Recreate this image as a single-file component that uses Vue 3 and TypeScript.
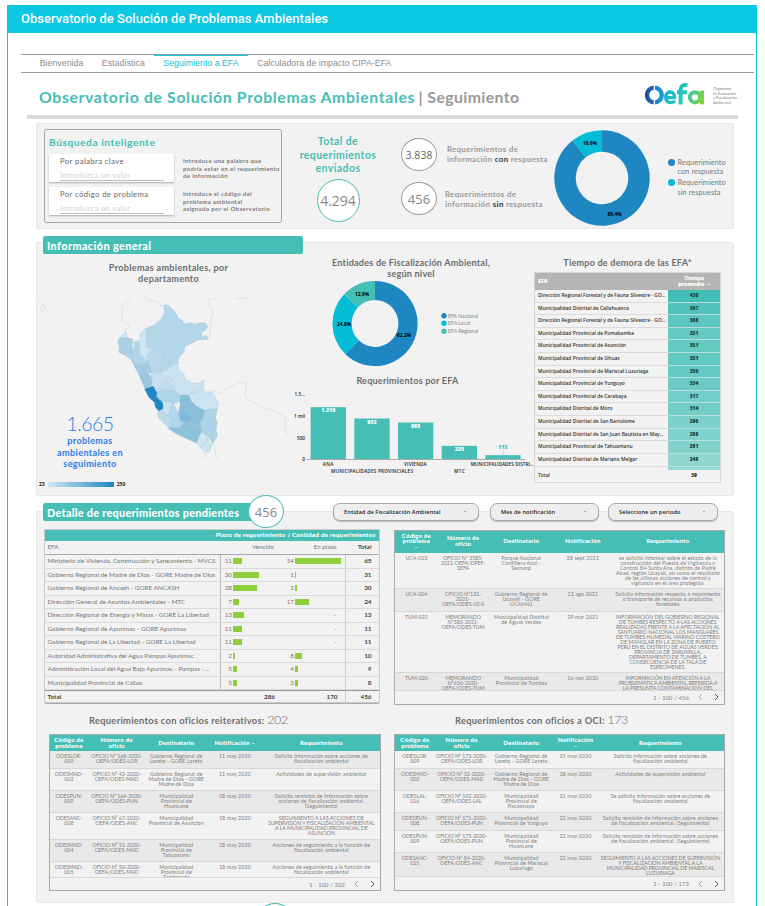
<script setup lang="ts">
interface Region { d: string; fill: string }
interface Grid {
  id: string
  cols: number[]
  head: string[]
  headHeight: number
  rows: { h: number; cells: string[] }[]
  shadeFirst: boolean
  footer: string
}

const tabs = ['Bienvenida', 'Estadística', 'Seguimiento a EFA', 'Calculadora de impacto CIPA-EFA']

const regions: Region[] = [
  { fill: '#b3d6e8', d: 'M400 225L410 222L420 229L428 236L437 246L445 262L458 270L462 279L487 276L490 282L511 276L527 277L534 288L528 296L514 308L517 320L528 314L536 326L502 328L486 338L466 346L461 366L450 376L444 390L445 400L428 402L412 418L392 424L385 412L403 385L400 368L372 362L350 350L348 300L347 294L374 282L394 264L404 246Z' },
  { fill: '#d0e5f1', d: 'M270 318L288 304L291 312L288 320L272 322Z' },
  { fill: '#abd1e6', d: 'M268 322L290 320L308 326L306 345L312 360L302 372L294 364L284 373L272 368L267 365L268 350L263 332Z' },
  { fill: '#a9d0e5', d: 'M284 373L290 360L305 360L314 376L310 390L302 385Z' },
  { fill: '#b0d4e8', d: 'M312 334L326 330L332 360L330 368L345 384L344 400L326 404L314 392L310 370L312 350Z' },
  { fill: '#d0e5f1', d: 'M330 322L330 308L347 294L350 350L359 362L356 378L342 382L330 368L328 340Z' },
  { fill: '#b8d8ea', d: 'M359 360L372 362L400 368L403 385L390 400L392 424L372 430L358 410L347 395L350 378Z' },
  { fill: '#a0cbe3', d: 'M302 386L314 392L326 404L345 400L352 392L362 414L368 428L358 426L350 420L326 430L316 412Z' },
  { fill: '#9ac8e1', d: 'M326 430L350 420L364 440L368 456L362 470L345 474L334 450Z' },
  { fill: '#c8e1ef', d: 'M364 430L392 426L398 446L418 438L428 450L412 456L392 460L384 480L368 464Z' },
  { fill: '#cbe3f0', d: 'M392 428L412 418L428 402L440 398L448 420L462 430L466 446L488 458L506 458L522 448L520 476L502 480L480 490L456 492L440 480L430 460L420 436L400 444Z' },
  { fill: '#c1ddec', d: 'M382 484L392 460L412 450L430 462L436 480L410 480Z' },
  { fill: '#1e86c1', d: 'M343 474L370 466L382 486L380 498L396 512L402 526L398 536L386 542L376 530L372 514L356 500Z' },
  { fill: '#b0d4e8', d: 'M382 484L410 478L438 480L454 496L448 514L430 520L416 514L398 514L382 500Z' },
  { fill: '#c9e2ef', d: 'M400 520L416 514L422 530L418 552L406 556L400 540Z' },
  { fill: '#bbdaea', d: 'M386 542L400 536L406 556L416 570L420 592L404 580L388 564L382 550Z' },
  { fill: '#b3d6e8', d: 'M424 516L432 524L446 546L448 570L462 574L452 592L420 592L418 566L408 556L420 548Z' },
  { fill: '#8abedb', d: 'M450 494L476 492L482 508L500 526L526 538L520 560L512 586L484 578L450 570L446 546L450 520Z' },
  { fill: '#7fb9d9', d: 'M446 546L466 542L484 560L480 577L450 572Z' },
  { fill: '#cce3f0', d: 'M478 490L520 478L522 484L548 486L566 520L562 534L526 540L500 526L484 510Z' },
  { fill: '#aed3e7', d: 'M526 538L562 534L556 562L562 574L558 600L563 614L548 640L536 620L514 604L510 580L520 560Z' },
  { fill: '#8fc1dd', d: 'M412 592L452 590L462 574L484 578L512 586L514 604L500 638L470 624L440 610Z' },
  { fill: '#d0e5f1', d: 'M500 638L510 612L520 606L532 622L520 646L510 650Z' },
  { fill: '#cce3f0', d: 'M510 650L522 640L532 622L540 640L546 640L540 662L528 666Z' },
]

const bars = [
  { x: 62, y: 471, v: '1.218', ly: 484, fill: '#fff' },
  { x: 193, y: 505, v: '953', ly: 520, fill: '#fff' },
  { x: 324, y: 517, v: '865', ly: 532, fill: '#fff' },
  { x: 455, y: 587, v: '325', ly: 601, fill: '#fff' },
  { x: 586, y: 615, v: '115', ly: 595, fill: '#45beb5' },
]

const delays: [string, number, string][] = [
  ['Dirección Regional Forestal y de Fauna Silvestre - GO...', 430, '#42beb4'],
  ['Municipalidad Distrital de Callahuanca', 397, '#50c2b9'],
  ['Dirección Regional Forestal y de Fauna Silvestre - GO...', 368, '#5dc6be'],
  ['Municipalidad Provincial de Pomabamba', 351, '#64c9c1'],
  ['Municipalidad Provincial de Asunción', 351, '#64c9c1'],
  ['Municipalidad Provincial de Sihuas', 351, '#64c9c1'],
  ['Municipalidad Provincial de Mariscal Luzuriaga', 350, '#64c9c1'],
  ['Municipalidad Provincial de Yunguyo', 334, '#6bcbc4'],
  ['Municipalidad Provincial de Carabaya', 317, '#73cec7'],
  ['Municipalidad Distrital de Moro', 314, '#74cec7'],
  ['Municipalidad Distrital de San Bartolome', 290, '#7ed1cb'],
  ['Municipalidad Distrital de San Juan Bautista en May...', 288, '#7fd1cb'],
  ['Municipalidad Provincial de Tahuamanu', 281, '#82d2cc'],
  ['Municipalidad Distrital de Mariano Melgar', 248, '#90d7d1'],
  ['Municipalidad Provincial de Puno', 241, '#94d8d3'],
]

const pending: [string, number, number, number][] = [
  ['Ministerio de Vivienda, Construcción y Saneamiento - MVCS', 11, 54, 65],
  ['Gobierno Regional de Madre de Dios - GORE Madre de Dios', 30, 1, 31],
  ['Gobierno Regional de Ancash - GORE ANCASH', 28, 2, 30],
  ['Dirección General de Asuntos Ambientales - MTC', 7, 17, 24],
  ['Dirección Regional de Energía y Minas - GORE La Libertad', 13, 0, 13],
  ['Gobierno Regional de Apurímac - GORE Apurímac', 11, 0, 11],
  ['Gobierno Regional de La Libertad - GORE La Libertad', 11, 0, 11],
  ['Autoridad Administrativa del Agua Pampas Apurímac', 2, 8, 10],
  ['Administración Local del Agua Bajo Apurímac - Pampas - ...', 5, 4, 9],
  ['Municipalidad Provincial de Callao', 5, 3, 8],
]
const barWidth = (n: number) => ({ width: Math.max(n * 0.85, 1.4) + 'px' })

const filters = [
  { label: 'Entidad de Fiscalización Ambiental', cls: 'f1' },
  { label: 'Mes de notificación', cls: 'f2' },
  { label: 'Seleccione un periodo', cls: 'f3' },
]

const main: Grid = {
  id: 'main', cols: [43, 51, 66, 58, 113], headHeight: 22.5, shadeFirst: false, footer: '1 - 100 / 456',
  head: ['Código de\nproblema\n–', 'Número de\noficio', 'Destinatario', 'Notificación', 'Requerimiento'],
  rows: [
    { h: 36.5, cells: ['UCA-013', 'OFICIO N° 3585-\n2021-OEFA/DPEF-\nSEFA', 'Parque Nacional\nCordillera Azul -\nSernanp', '28 sept 2021', 'se solicitó informar sobre el estado de la\nconstrucción del Puesto de Vigilancia y\nControl 84-Santa Ana, distrito de Padre\nAbad, región Ucayali, así como el resultado\nde las últimas acciones de control y\nvigilancia en el área protegida.'] },
    { h: 22.5, cells: ['UCA-004', 'OFICIO N°131-\n2021-\nOEFA/ODES-UCA', 'Gobierno Regional de\nUcayali - GORE\nUCAYALI', '13 ago 2021', 'Solicita información respecto a movimiento\no transporte de recursos o productos\nforestales'] },
    { h: 61, cells: ['TUM-021', 'MEMORANDO\nN°380-2021-\nOEFA/ODES-TUM', 'Municipalidad Distrital\nde Aguas Verdes', '29 mar 2021', 'INFORMACIÓN DEL GOBIERNO REGIONAL\nDE TUMBES RESPECTO A LAS ACCIONES\nREALIZADAS FRENTE A LA AFECTACIÓN AL\nSANTUARIO NACIONAL LOS MANGLARES\nDE TUMBES HUMEDAL MARINO COSTERO\nDE MANGLAR EN LA ZONA DE PUERTO\nPERÚ EN EL DISTRITO DE AGUAS VERDES,\nPROVINCIA DE ZARUMILLA,\nDEPARTAMENTO DE TUMBES, A\nCONSECUENCIA DE LA TALA DE\nESPECÍMENES.'] },
    { h: 18, cells: ['TUM-020', 'MEMORANDO\nN°650-2020-\nOEFA/ODES-TUM', 'Municipalidad\nProvincial de Tumbes', '16 nov 2020', 'INFORMACIÓN EN ATENCIÓN A LA\nPROBLEMÁTICA AMBIENTAL REFERIDA A\nLA PRESUNTA CONTAMINACIÓN DEL'] },
  ],
}
const reiterated: Grid = {
  id: 'reit', cols: [38, 58, 62, 56, 118], headHeight: 17, shadeFirst: true, footer: '1 - 100 / 202',
  head: ['Código de\nproblema', 'Número de\noficio', 'Destinatario', 'Notificación –', 'Requerimiento'],
  rows: [
    { h: 17.5, cells: ['ODESLOR-\n009', 'OFICIO N° 168-2020-\nOEFA/ODES-LOR', 'Gobierno Regional de\nLoreto - GORE Loreto', '11 may 2020', 'Solicito información sobre acciones de\nfiscalización ambiental'] },
    { h: 22.3, cells: ['ODESMAD-\n002', 'OFICIO N° 43-2020-\nOEFA/ODES-MAD', 'Gobierno Regional de\nMadre de Dios - GORE\nMadre de Dios', '11 may 2020', 'Actividades de supervisión ambiental'] },
    { h: 22.2, cells: ['ODESPUN-\n009', 'OFICIO N° 164-2020-\nOEFA/ODES-PUN', 'Municipalidad\nProvincial de\nHuancane', '18 may 2020', 'Solicito remisión de información sobre\nacciones de fiscalización ambiental.\n(Seguimiento)'] },
    { h: 27.2, cells: ['ODESANC-\n008', 'OFICIO N° 67-2020-\nOEFA/ODES-ANC', 'Municipalidad\nProvincial de Asunción', '18 may 2020', 'SEGUIMIENTO A LAS ACCIONES DE\nSUPERVISIÓN Y FISCALIZACIÓN AMBIENTAL\nA LA MUNICIPALIDAD PROVINCIAL DE\nASUNCIÓN'] },
    { h: 22.3, cells: ['ODESMAD-\n004', 'OFICIO N° 51-2020-\nOEFA/ODES-MAD', 'Municipalidad\nProvincial de\nTahuamanu', '18 may 2020', 'Acciones de seguimiento a la función de\nfiscalización ambiental'] },
    { h: 15.5, cells: ['ODESMAD-\n005', 'OFICIO N° 50-2020-\nOEFA/ODES-MAD', 'Municipalidad\nProvincial de\nTambopata', '18 may 2020', 'Acciones de seguimiento a la función de\nfiscalización ambiental'] },
  ],
}
const oci: Grid = {
  id: 'oci', cols: [40, 54, 66, 43, 128], headHeight: 17, shadeFirst: false, footer: '1 - 100 / 173',
  head: ['Código de\nproblema', 'Número de\noficio', 'Destinatario', 'Notificación\n–', 'Requerimiento'],
  rows: [
    { h: 17.5, cells: ['ODESLOR-\n009', 'OFICIO N° 173-2020-\nOEFA/ODES-LOR', 'Gobierno Regional de\nLoreto - GORE Loreto', '15 may 2020', 'Solicito información sobre acciones de\nfiscalización ambiental'] },
    { h: 22.3, cells: ['ODESMAD-\n002', 'OFICIO N° 52-2020-\nOEFA/ODES-MAD', 'Gobierno Regional de\nMadre de Dios - GORE\nMadre de Dios', '18 may 2020', 'Actividades de supervisión ambiental'] },
    { h: 22, cells: ['ODESLAL-\n016', 'OFICIO N° 192-2020-\nOEFA/ODES-LAL', 'Municipalidad\nProvincial de\nPacasmayo', '21 may 2020', 'Se solicita información sobre acciones de\nfiscalización ambiental'] },
    { h: 18, cells: ['ODESPUN-\n008', 'OFICIO N° 171-2020-\nOEFA/ODES-PUN', 'Municipalidad\nProvincial de Yunguyo', '22 may 2020', 'Solicito remisión de información sobre acciones\nde fiscalización ambiental. (Seguimiento)'] },
    { h: 22.2, cells: ['ODESPUN-\n009', 'OFICIO N° 175-2020-\nOEFA/ODES-PUN', 'Municipalidad\nProvincial de\nHuancane', '22 may 2020', 'Solicito remisión de información sobre acciones\nde fiscalización ambiental. (Seguimiento)'] },
    { h: 24.5, cells: ['ODESANC-\n015', 'OFICIO N° 84-2020-\nOEFA/ODES-ANC', 'Municipalidad\nProvincial de Mariscal\nLuzuriaga', '22 may 2020', 'SEGUIMIENTO A LAS ACCIONES DE SUPERVISIÓN\nY FISCALIZACIÓN AMBIENTAL A LA\nMUNICIPALIDAD PROVINCIAL DE MARISCAL\nLUZURIAGA'] },
  ],
}
const grids = [main, reiterated, oci]
const columns = (g: Grid) => ({ gridTemplateColumns: g.cols.map(c => c + 'fr').join(' ') })
const isUpper = (s: string) => s === s.toUpperCase()

function ring(cx: number, cy: number, R: number, r: number, from: number, to: number): string {
  const p = (rad: number, t: number) => {
    const a = t * Math.PI * 2
    return `${(cx + rad * Math.sin(a)).toFixed(2)} ${(cy - rad * Math.cos(a)).toFixed(2)}`
  }
  const big = to - from > 0.5 ? 1 : 0
  return `M${p(R, from)}A${R} ${R} 0 ${big} 1 ${p(R, to)}L${p(r, to)}A${r} ${r} 0 ${big} 0 ${p(r, from)}Z`
}
</script>

<template>
  <div class="frame">
    <header class="top">Observatorio de Solución de Problemas Ambientales</header>
    <nav class="tabs">
      <a v-for="(t, i) in tabs" :key="t" :class="['tab', { active: i === 2 }]">{{ t }}</a>
    </nav>

    <div class="title">
      <h1><span class="teal">Observatorio de Solución Problemas Ambientales</span> <span class="sub">| Seguimiento</span></h1>
      <svg class="logo" viewBox="0 0 98 28" width="98" height="28">
        <defs>
          <linearGradient id="g1" gradientUnits="userSpaceOnUse" x1="4" y1="12" x2="23" y2="12"><stop offset="0" stop-color="#1e46a0" /><stop offset=".5" stop-color="#1b78c4" /><stop offset="1" stop-color="#18a8dc" /></linearGradient>
          <linearGradient id="g2" gradientUnits="userSpaceOnUse" x1="23" y1="6" x2="62" y2="22"><stop offset="0" stop-color="#0eb0dc" /><stop offset=".5" stop-color="#2bcab4" /><stop offset="1" stop-color="#86d435" /></linearGradient>
        </defs>
        <circle cx="13.4" cy="12" r="7.4" fill="none" stroke="url(#g1)" stroke-width="4.4" />
        <path d="M13.4 1v6M13.4 17v6" stroke="#fff" stroke-width="1.3" />
        <g fill="none" stroke="url(#g2)">
          <path d="M25 14.6H33.6C33.6 11 31.8 9 29.2 9C26.4 9 24.7 11.2 24.7 14.3C24.7 17.6 26.6 19.6 29.6 19.6C31.4 19.6 32.9 18.9 34 17.8" stroke-width="3.3" />
          <path d="M39.6 21.4V6.6C39.6 3.1 41.8 1.4 46.4 2.1M36 9.2H46" stroke-width="4" />
          <circle cx="54" cy="14.3" r="5.1" stroke-width="4" />
          <path d="M61 7.6V21.4" stroke-width="4" />
        </g>
        <g font-family="Lato, sans-serif" font-size="4.2" fill="#888">
          <text x="72" y="6.8" textLength="18">Organismo</text><text x="72" y="11.8" textLength="23">de Evaluación</text>
          <text x="72" y="16.4" textLength="24">y Fiscalización</text><text x="72" y="21" textLength="18">Ambiental</text>
        </g>
      </svg>
    </div>
    <div class="rule"></div>

    <section class="panel summary">
      <div class="search">
        <h2>Búsqueda inteligente</h2>
        <div class="srow">
          <label class="field"><span>Por palabra clave</span><i>Introduzca un valor</i></label>
          <p>Introduce una palabra que<br>podría estar en el requerimiento<br>de información</p>
        </div>
        <div class="srow second">
          <label class="field"><span>Por código de problema</span><i>Introduzca un valor</i></label>
          <p>Introduce el código del<br>problema ambiental<br>asignado por el Observatorio</p>
        </div>
      </div>
      <div class="sent">
        <h2>Total de<br>requerimientos<br>enviados</h2>
        <b class="circle big">4.294</b>
      </div>
      <div class="answers">
        <div class="answer"><b class="circle dark">3.838</b><p>Requerimientos de<br>información <strong>con</strong> respuesta</p></div>
        <div class="answer low"><b class="circle light">456</b><p>Requerimientos de<br>información <strong>sin</strong> respuesta</p></div>
      </div>
      <svg class="donut" viewBox="0 0 98 98" width="98" height="98">
        <path :d="ring(49, 49, 47.7, 26.3, 0, 0.894)" fill="#1e86c1" />
        <path :d="ring(49, 49, 47.7, 26.3, 0.894, 1)" fill="#05bcd7" />
        <g class="tiny" text-anchor="middle"><text x="37" y="15.5">10,6%</text><text x="61.5" y="86.5">89,4%</text></g>
      </svg>
      <ul class="legend">
        <li><i class="blue"></i>Requerimiento<br>con respuesta</li>
        <li><i class="cyan"></i>Requerimiento<br>sin respuesta</li>
      </ul>
    </section>

    <section class="panel general">
      <h2 class="ribbon">Información general</h2>
      <div class="mapcol">
        <h3>Problemas ambientales, por<br>departamento</h3>
        <svg class="map" viewBox="18 190 762 510" width="254" height="170">
          <g fill="none" stroke="#dedede" stroke-width="2.5">
            <path d="M298 200L292 212L278 224L274 250L278 270L288 278L300 280L296 292L284 296L288 304M342 200L358 208L380 214L388 224L400 226M557 204L536 206L534 216L550 244L544 262L540 318L536 326M522 480L552 482L575 488L588 472L610 466L622 457L646 455L648 480L644 496L658 508L690 526L730 540L764 556L766 590L770 615L778 615M548 640L556 660L558 676L568 688M526 666V686M616 201L628 204L636 202L648 206L652 200" />
            <path d="M22 210L26 212M20 224H26M34 220L42 224L44 238L34 242L32 232L38 228M50 236L54 240M65 238L72 240M56 250L60 253M36 254H40" />
          </g>
          <path v-for="(r, i) in regions" :key="i" :d="r.d" :fill="r.fill" stroke="#a5c8da" stroke-width="1.2" stroke-linejoin="round" />
        </svg>
        <div class="count"><b>1.665</b>problemas<br>ambientales en<br>seguimiento</div>
        <div class="scale"><span>23</span><i></i><span>250</span></div>
      </div>
      <div class="midcol">
        <h3>Entidades de Fiscalización Ambiental,<br>según nivel</h3>
        <svg class="level" viewBox="0 0 250 87" width="250" height="87">
          <path :d="ring(85, 43.5, 42.6, 23.4, 0, 0.622)" fill="#1e86c1" />
          <path :d="ring(85, 43.5, 42.6, 23.4, 0.622, 0.871)" fill="#05bcd7" />
          <path :d="ring(85, 43.5, 42.6, 23.4, 0.871, 1)" fill="#45beb5" />
          <g class="tiny" text-anchor="middle"><text x="72" y="16">12,9%</text><text x="54" y="46">24,8%</text><text x="114" y="57">62,2%</text></g>
          <circle cx="154" cy="35.7" r="2.7" fill="#1e86c1" /><circle cx="154" cy="43.3" r="2.7" fill="#05bcd7" /><circle cx="154" cy="51.3" r="2.7" fill="#45beb5" />
          <g class="lvl"><text x="158" y="37.8" textLength="30">EFA Nacional</text><text x="158" y="45.2" textLength="22">EFA Local</text><text x="158" y="53.2" textLength="30">EFA Regional</text></g>
        </svg>
        <h3 class="h-bars">Requerimientos por EFA</h3>
        <svg class="bars" viewBox="0 405 750 275" width="250" height="92">
          <path d="M0 407H735M0 677H735M50 433H705" stroke="#e9e9e9" stroke-width="2" fill="none" />
          <rect v-for="b in bars" :key="b.v" :x="b.x" :y="b.y" width="106" :height="627 - b.y" fill="#45beb5" />
          <path d="M50 628H705" stroke="#aaa" stroke-width="3" /><path d="M639 600V615" stroke="#bbb" stroke-width="2" />
          <g class="barval" text-anchor="middle"><text v-for="b in bars" :key="b.v" :x="b.x + 53" :y="b.ly + 2" :fill="b.fill">{{ b.v }}</text></g>
          <g class="axis">
            <text x="45" y="438" text-anchor="end">1,5...</text><text x="45" y="503" text-anchor="end">1 mil</text><text x="45" y="569" text-anchor="end">500</text><text x="45" y="633" text-anchor="end">0</text>
            <text x="98" y="648" textLength="32">ANA</text><text x="342" y="648" textLength="68">VIVIENDA</text><text x="542" y="648" textLength="190">MUNICIPALIDADES DISTRI...</text>
            <text x="123" y="669" textLength="246">MUNICIPALIDADES PROVINCIALES</text><text x="492" y="669" textLength="33">MTC</text>
          </g>
        </svg>
      </div>
      <div class="delaycol">
        <h3>Tiempo de demora de las EFA*</h3>
        <div class="delay">
          <div class="dhead"><span>EFA</span><span class="c">Tiempo<br>promedio &nbsp;–</span></div>
          <div class="dbody">
            <div v-for="(d, i) in delays" :key="i" class="drow"><span>{{ d[0] }}</span><b :style="{ background: d[2] }">{{ d[1] }}</b></div>
          </div>
          <div class="dtotal"><span>Total</span><b>39</b></div>
        </div>
      </div>
    </section>

    <section class="panel detail">
      <h2 class="ribbon wide">Detalle de requerimientos pendientes</h2>
      <b class="circle badge">456</b>
      <div class="filters">
        <button v-for="f in filters" :key="f.label" :class="['filter', f.cls]"><span>{{ f.label }}</span><i></i></button>
      </div>

      <div class="tables">
        <div class="pend">
          <div class="phead">Plazo de requerimiento / Cantidad de requerimientso</div>
          <div class="prow psub"><span>EFA</span><span class="r">Vencido</span><span class="r">En plazo</span><b>Total</b></div>
          <div v-for="p in pending" :key="p[0]" class="prow">
            <span>{{ p[0] }}</span>
            <span class="cell"><em>{{ p[1] }}</em><i :style="barWidth(p[1])"></i></span>
            <span v-if="p[2]" class="cell plazo"><em>{{ p[2] }}</em><i :style="barWidth(p[2])"></i></span>
            <span v-else class="cell r">-</span>
            <b>{{ p[3] }}</b>
          </div>
          <div class="prow ptotal"><b class="l">Total</b><b class="m">286</b><b class="m">170</b><b>456</b></div>
        </div>

        <template v-for="g in grids" :key="g.id">
          <h3 v-if="g.id === 'reit'" class="cap capl">Requerimientos con oficios reiterativos: <b>202</b></h3>
          <h3 v-if="g.id === 'reit'" class="cap capr">Requerimientos con oficios a OCI: <b>173</b></h3>
          <div :class="['grid', g.id]">
            <div class="gr gh" :style="{ ...columns(g), height: g.headHeight + 'px' }"><span v-for="h in g.head" :key="h">{{ h }}</span></div>
            <div v-for="(r, i) in g.rows" :key="i" :class="['gr', { shade: (i % 2 === 0) === g.shadeFirst }]" :style="{ ...columns(g), height: r.h + 'px' }">
              <span v-for="(c, j) in r.cells" :key="j" :class="{ up: isUpper(c) }">{{ c }}</span>
            </div>
            <div class="gf">{{ g.footer }}
              <svg viewBox="0 0 24 8" width="24" height="8" fill="none" stroke-width="1"><path d="M5 1L2 4L5 7" stroke="#aaa" /><path d="M18 1L21 4L18 7" stroke="#555" /></svg>
            </div>
          </div>
        </template>
      </div>
    </section>
    <b class="circle next"></b>
  </div>
</template>

<style>
body { background: #fff; overflow: hidden; }
</style>

<style scoped>
* { box-sizing: border-box; margin: 0; padding: 0; }
.frame { position: relative; width: 750px; height: 901px; margin: 5px 0 0 7px; border: solid #0dc8e2; border-width: 0 1px; overflow: hidden; font-family: Lato, "Open Sans", sans-serif; color: #777; }
.top { height: 28px; margin: 0 -1px; padding-left: 14px; background: #0dc8e2; color: #fff; font: 500 12.9px/27px Roboto, sans-serif; letter-spacing: .08px; }
.tabs { display: flex; width: 733px; height: 19px; margin: 21px 0 0 13px; border: solid #999; border-width: 1px 0; font: 8.8px/14px "Liberation Sans", sans-serif; color: #8c8c8c; padding-left: 9.5px; }
.tab { padding: 0 9.25px; border-top: 1px solid transparent; }
.tab.active { color: #10bcd6; border-color: #0dc8e2; }
.title { display: flex; justify-content: space-between; width: 699px; height: 42px; margin-left: 31px; padding-top: 9px; }
h1 { font-size: 15.8px; line-height: 30px; font-weight: 700; white-space: nowrap; letter-spacing: .64px; }
.teal { color: #45beb5; }
.sub { color: #999; margin-left: -1px; letter-spacing: .4px; }
.logo { margin: 1px -1px 0 0; }
.rule { width: 711px; height: 4px; margin-left: 19px; background: #d9d9d9; }
.panel { width: 698px; margin-left: 28px; background: #f2f2f2; border: 1px solid #e6e6e6; border-radius: 2px; }
.summary { display: flex; height: 106px; margin-top: 4px; padding: 5px 0 0 7px; }
h2 { color: #45beb5; font-weight: 700; white-space: nowrap; }
.search { width: 238px; height: 94px; border: 1px solid #a8a8a8; border-radius: 2px; padding-left: 4px; }
.search h2 { font-size: 10.2px; line-height: 12px; margin: 6px 0 6px; letter-spacing: .55px; }
.srow { display: flex; }
.srow.second { margin-top: 5px; }
.field { width: 125px; height: 28px; background: #fff; box-shadow: 0 1px 1.5px #aaa; padding: 3px 10px 0 11px; }
.field span { display: block; font-size: 7.7px; line-height: 9px; color: #666; white-space: nowrap; letter-spacing: .4px; }
.field i { display: block; height: 15px; padding-top: 4px; border-bottom: 1px solid #bbb; font: 7.5px/11px Lato, sans-serif; color: #d2d2d2; letter-spacing: .4px; }
.srow p { margin: 3px 0 0 9px; font-size: 6px; line-height: 7.5px; font-weight: 700; white-space: nowrap; color: #7c7c7c; letter-spacing: .36px; }
.sent { width: 112px; text-align: center; }
.sent h2 { font-size: 10.5px; line-height: 13.5px; margin-top: 6px; letter-spacing: .42px; }
.circle { display: flex; align-items: center; justify-content: center; border-radius: 50%; border: 1px solid #999; background: #fff; font-family: "Open Sans", sans-serif; font-weight: 400; color: #888; }
.big { width: 43px; height: 43px; margin: 3px auto 0; border-color: #45beb5; font-size: 14px; }
.answers { width: 154px; padding: 9px 0 0 7px; }
.answer { display: flex; height: 33px; gap: 10px; align-items: center; }
.answer.low { margin-top: 11px; }
.answer p { font-size: 7.8px; line-height: 9.5px; font-weight: 700; color: #999; white-space: nowrap; letter-spacing: .36px; }
.answer.low p { margin-left: -2px; padding-top: 2px; }
.answer strong { color: #444; font-weight: 900; }
.answer .circle { width: 36px; height: 33px; flex: none; }
.dark { font-size: 10.5px; color: #666; }
.light { font-size: 13px; }
.donut { margin: 0 0 0 5px; flex: none; }
.tiny { font: 700 4.8px "Open Sans", sans-serif; fill: #000; }
.legend { list-style: none; margin: 29px 0 0 17px; font-size: 7.3px; line-height: 9.2px; white-space: nowrap; letter-spacing: .1px; }
.legend li { position: relative; padding-left: 9.5px; margin-bottom: 2px; }
.legend i { position: absolute; left: 0; top: 1px; width: 7px; height: 7px; border-radius: 50%; }
.blue { background: #1e86c1; }
.cyan { background: #05bcd7; }
.general { display: flex; height: 254px; margin-top: 13px; position: relative; }
.ribbon { position: absolute; left: 6px; top: -7px; width: 260px; height: 18px; background: #45beb5; color: #fff; border-radius: 2px; font-size: 10.8px; line-height: 19px; padding-left: 4px; font-weight: 900; letter-spacing: .42px; }
h3 { font-size: 9.1px; line-height: 11px; font-weight: 700; color: #6c6c6c; text-align: center; white-space: nowrap; letter-spacing: .2px; }
.mapcol { position: relative; width: 253px; }
.mapcol h3 { margin-top: 19px; width: 263px; letter-spacing: .3px; }
.map { display: block; margin: 10px 0 0 -1px; }
.count { position: absolute; left: 3px; top: 169px; width: 100px; text-align: center; color: #2c7be5; font-size: 9.1px; line-height: 11.6px; font-weight: 700; letter-spacing: .35px; }
.count b { display: block; font-size: 19.5px; line-height: 23px; font-weight: 300; letter-spacing: -.6px; }
.scale { display: flex; align-items: center; margin: 17px 0 0 2px; font: 700 5px/6px "Open Sans", sans-serif; color: #222; gap: 3px; }
.scale i { width: 66px; height: 5px; background: linear-gradient(90deg, #d0e6f2, #1e86c1); }
.midcol { width: 244px; padding-top: 14px; }
.midcol h3 { width: 242px; }
.level { display: block; margin: 1px 0 0; }
.lvl { font: 5.2px Lato, sans-serif; fill: #888; }
.midcol .h-bars { width: 235px; margin-top: 8px; }
.bars { display: block; margin-top: -1px; }
.barval { font: 800 16px "Open Sans", sans-serif; }
.axis { font: 600 14px "Open Sans", sans-serif; fill: #222; }
.delaycol { position: relative; width: 187px; padding-top: 14px; }
.delay { margin-top: 4px; border: 1px solid #d6d6d6; height: 211px; font: 600 4.9px/6px "Open Sans", sans-serif; color: #333; }
.dhead { display: flex; align-items: center; height: 17px; background: #b5b5b5; color: #fff; font-weight: 800; padding-left: 3px; font-size: 5.3px; line-height: 5.8px; }
.dhead .c { margin-left: auto; width: 52px; text-align: center; }
.dbody { height: 179.5px; overflow: hidden; }
.drow { display: flex; height: 12.62px; align-items: stretch; border-bottom: 1px solid #dcdcdc; line-height: 11.8px; white-space: nowrap; padding-left: 3px; }
.drow b, .dtotal b { margin-left: auto; width: 52px; text-align: center; }
.drow b { margin-bottom: -1px; border-bottom: 1px solid #b9dedb; color: #173f3c; }
.dtotal { display: flex; padding: 2px 0 0 3px; }
.detail { position: relative; height: 392px; margin-top: 15px; }
.ribbon.wide { top: -9px; width: 222px; font-size: 10.9px; letter-spacing: .26px; }
.badge { position: absolute; left: 211px; top: -17px; width: 36px; height: 33px; border-color: #45beb5; font-size: 13px; }
.filters { position: absolute; left: 296px; top: -9px; display: flex; gap: 11px; }
.filter { display: flex; align-items: center; justify-content: space-between; width: 110px; height: 18px; padding: 0 12px 0 10px; border: 1px solid #aaa; border-radius: 7px; background: #eee; box-shadow: 0 1px 1px #bbb; font: 600 5.6px/8px "Open Sans", sans-serif; color: #222; white-space: nowrap; letter-spacing: .1px; }
.filter.f1 { width: 146px; }
.filter.f2 { width: 109px; }
.filter.f3 { margin-left: -2px; }
.filter i { border: 1.3px solid transparent; border-top-color: #555; }
.tables { display: grid; grid-template-columns: 337px 331px; grid-template-rows: 177px 28px 157px; column-gap: 13px; align-items: start; padding: 17px 0 0 7px; }
.pend { width: 336px; height: 174px; border: 1px solid #ccc; font-size: 6.35px; margin-left: -.5px; }
.phead { height: 11px; background: #45beb5; color: #fff; text-align: right; padding-right: 3px; line-height: 10px; font-weight: 900; font-size: 6.4px; letter-spacing: .16px; }
.prow { display: grid; grid-template-columns: 175.5px 62px 62.5px 34px; height: 13.5px; line-height: 12.5px; border-bottom: 1px solid #dadada; white-space: nowrap; }
.prow > span:first-child, .prow .l { padding-left: 3px; text-align: left; border: 0; }
.prow > b { text-align: right; padding-right: 7px; border-left: 1px solid #ccc; color: #444; }
.psub { border-color: #aaa; height: 14px; font-size: 6.2px; }
.psub > b { border: 0; }
.r { text-align: right; padding-right: 8px; }
.cell { display: flex; align-items: center; gap: 1px; border-left: 1px solid #bbb; }
.cell em { font-style: normal; width: 11px; text-align: right; }
.cell.plazo, .cell.r { border-left-color: #f2f2f2; }
.cell i { height: 6px; background: #8ed03c; }
.cell.r { justify-content: flex-end; }
.ptotal { border-top: 1px solid #999; border-bottom-color: #aaa; }
.ptotal .m { border: 0; }
.grid { border: 1px solid #aaa; overflow: hidden; font-size: 5.3px; line-height: 5px; text-align: center; letter-spacing: .12px; color: #808080; }
.grid.main { height: 175px; margin-top: 1px; }
.grid.reit { width: 332px; margin-left: 5px; height: 157px; }
.grid.oci { height: 157px; }
.gr { display: grid; overflow: hidden; border-bottom: 1px solid #d8d8d8; }
.gr span { white-space: pre; padding-top: 3px; display: flex; justify-content: center; align-items: flex-start; }
.gr .up { letter-spacing: -.06px; }
.gr.shade { background: #e9e9e9; }
.gr.gh { background: #45beb5; color: #fff; font-weight: 900; font-size: 6.1px; line-height: 5.8px; border: 0; margin: -1px 0 0; letter-spacing: .18px; }
.gr.gh span { padding: 0; align-items: center; }
.gf { display: flex; height: 13px; align-items: center; justify-content: flex-end; gap: 8px; padding-right: 3px; font-size: 5.8px; }
.cap { font-size: 9.3px; line-height: 28px; letter-spacing: .3px; }
.cap b { font-weight: 300; font-size: 12.5px; letter-spacing: -.3px; }
.capl { padding-right: 48px; }
.capr { padding-right: 36px; }
.next { position: absolute; left: 249px; top: 898px; width: 36px; height: 33px; border-color: #45beb5; }
</style>
